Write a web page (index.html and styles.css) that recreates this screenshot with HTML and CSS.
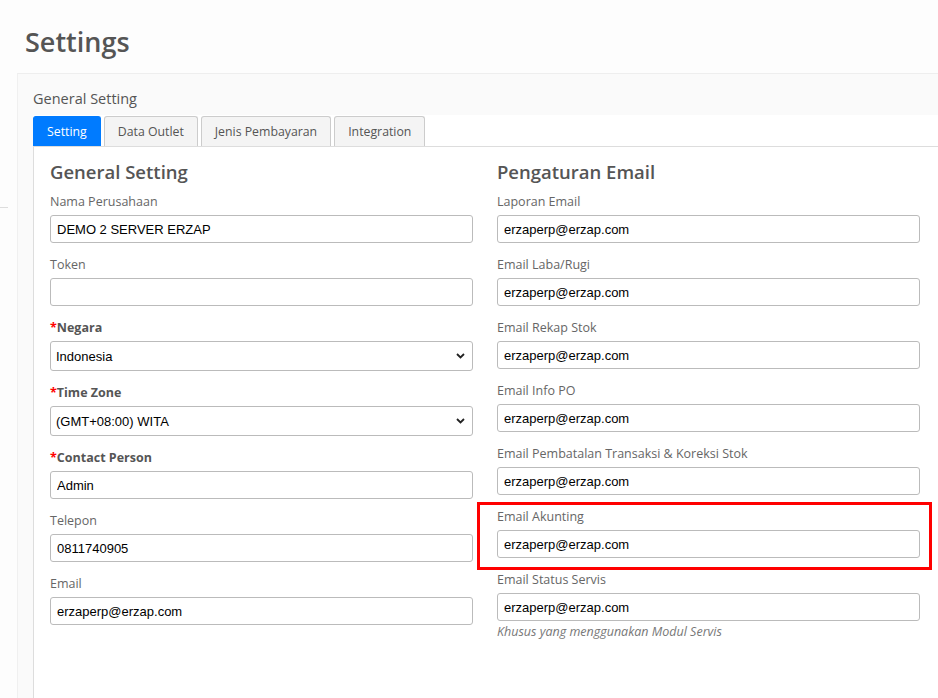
FILE: index.html
```html
<!DOCTYPE html>
<html lang="id">
<head>
    <meta charset="UTF-8">
    <meta name="viewport" content="width=device-width, initial-scale=1.0">
    <title>Settings</title>
    <link rel="stylesheet" href="styles.css">
</head>
<body>

    <!-- Judul halaman -->
    <h1 class="page-title">Settings</h1>

    <div class="page">
        <!-- sisa garis sidebar -->
        <div class="side-stub"></div>

        <div class="card">
            <div class="card-header">General Setting</div>

            <div class="card-body">
                <!-- Tab -->
                <nav class="tabs">
                    <a href="#" class="tab active">Setting</a>
                    <a href="#" class="tab">Data Outlet</a>
                    <a href="#" class="tab">Jenis Pembayaran</a>
                    <a href="#" class="tab">Integration</a>
                </nav>

                <div class="tab-panel">
                    <!-- Kolom kiri -->
                    <div class="col">
                        <h4 class="col-title">General Setting</h4>

                        <div class="form-group">
                            <label>Nama Perusahaan</label>
                            <input type="text" class="form-control" value="DEMO 2 SERVER ERZAP">
                        </div>
                        <div class="form-group">
                            <label>Token</label>
                            <input type="text" class="form-control" value="">
                        </div>
                        <div class="form-group">
                            <label class="required"><span class="star">*</span>Negara</label>
                            <div class="select-wrap">
                                <select class="form-control">
                                    <option>Indonesia</option>
                                </select>
                                <svg class="chevron" width="9" height="6" viewBox="0 0 9 6"><path d="M1 1l3.5 3.5L8 1" fill="none" stroke="#222" stroke-width="1.8"/></svg>
                            </div>
                        </div>
                        <div class="form-group">
                            <label class="required"><span class="star">*</span>Time Zone</label>
                            <div class="select-wrap">
                                <select class="form-control">
                                    <option>(GMT+08:00) WITA</option>
                                </select>
                                <svg class="chevron" width="9" height="6" viewBox="0 0 9 6"><path d="M1 1l3.5 3.5L8 1" fill="none" stroke="#222" stroke-width="1.8"/></svg>
                            </div>
                        </div>
                        <div class="form-group">
                            <label class="required"><span class="star">*</span>Contact Person</label>
                            <input type="text" class="form-control" value="Admin">
                        </div>
                        <div class="form-group">
                            <label>Telepon</label>
                            <input type="text" class="form-control" value="0811740905">
                        </div>
                        <div class="form-group">
                            <label>Email</label>
                            <input type="text" class="form-control" value="erzaperp@erzap.com">
                        </div>
                    </div>

                    <!-- Kolom kanan -->
                    <div class="col">
                        <h4 class="col-title">Pengaturan Email</h4>

                        <div class="form-group">
                            <label>Laporan Email</label>
                            <input type="text" class="form-control" value="erzaperp@erzap.com">
                        </div>
                        <div class="form-group">
                            <label>Email Laba/Rugi</label>
                            <input type="text" class="form-control" value="erzaperp@erzap.com">
                        </div>
                        <div class="form-group">
                            <label>Email Rekap Stok</label>
                            <input type="text" class="form-control" value="erzaperp@erzap.com">
                        </div>
                        <div class="form-group">
                            <label>Email Info PO</label>
                            <input type="text" class="form-control" value="erzaperp@erzap.com">
                        </div>
                        <div class="form-group">
                            <label>Email Pembatalan Transaksi &amp; Koreksi Stok</label>
                            <input type="text" class="form-control" value="erzaperp@erzap.com">
                        </div>
                        <div class="form-group highlight">
                            <label>Email Akunting</label>
                            <input type="text" class="form-control" value="erzaperp@erzap.com">
                        </div>
                        <div class="form-group">
                            <label>Email Status Servis</label>
                            <input type="text" class="form-control" value="erzaperp@erzap.com">
                            <small class="help">Khusus yang menggunakan Modul Servis</small>
                        </div>
                    </div>
                </div>
            </div>
        </div>
    </div>

</body>
</html>
```

FILE: styles.css
```css
/* Umum */
body {
    margin: 0;
    background-color: #fdfdfd;
    font-family: "Open Sans", "Noto Sans", sans-serif;
    color: #555;
    overflow: hidden;
    height: 698px;
}

.page-title {
    margin: 25px 0 14px 25px;
    font-size: 27px;
    line-height: 34px;
    font-weight: 600;
    color: #555;
}

.page {
    display: flex;
}

.side-stub {
    flex: none;
    width: 8px;
    height: 134px;
    margin-right: 9px;
    border-bottom: 1px solid #ddd;
}

/* Card */
.card {
    flex: 1;
    min-height: 640px;
    background-color: #fafafa;
    border-top: 1px solid #eee;
    border-left: 1px solid #f0f0f0;
    padding-left: 15px;
}

.card-header {
    padding: 15px 0 6px;
    font-size: 14.5px;
    line-height: 20px;
    color: #555;
}

.card-body {
    background-color: #fff;
}

/* Tab */
.tabs {
    display: flex;
    gap: 3px;
    padding-top: 1px;
    border-bottom: 1px solid #ddd;
}

.tab {
    display: block;
    height: 29px;
    line-height: 29px;
    padding: 0 13px;
    font-size: 12.3px;
    color: #555;
    text-decoration: none;
    background-color: #f4f4f4;
    border: 1px solid #ccc;
    border-bottom: none;
    border-radius: 3px 3px 0 0;
}

.tab.active {
    background-color: #007bff;
    border-color: #007bff;
    color: #fff;
}

.tab-panel {
    display: grid;
    grid-template-columns: 1fr 1fr;
    column-gap: 24px;
    padding: 13px 18px 0 16px;
    border-left: 1px solid #ddd;
    min-height: 540px;
}

.col-title {
    margin: 0 0 9px;
    font-size: 18.5px;
    line-height: 24px;
    font-weight: 600;
    color: #555;
}

/* Form */
.form-group {
    margin-bottom: 13px;
    position: relative;
}

.form-group label {
    display: block;
    margin-bottom: 4px;
    font-size: 12.5px;
    line-height: 18px;
    color: #666;
}

.form-group label.required {
    font-weight: 700;
    color: #555;
}

.star {
    color: #f00;
}

.form-control {
    display: block;
    width: 100%;
    box-sizing: border-box;
    height: 28px;
    margin: 0;
    padding: 0 6px;
    font-family: "Liberation Sans", Arial, sans-serif;
    font-size: 13px;
    color: #000;
    background-color: #fff;
    border: 1px solid #bbb;
    border-radius: 3px;
    outline: none;
}

select.form-control {
    height: 30px;
    padding-left: 5px;
    appearance: none;
    -webkit-appearance: none;
}

.select-wrap {
    position: relative;
}

.chevron {
    position: absolute;
    right: 8px;
    top: 12px;
}

.help {
    display: block;
    margin-top: 3px;
    font-size: 12.5px;
    line-height: 16px;
    font-style: italic;
    color: #777;
}

/* Kotak merah penanda */
.highlight::after {
    content: "";
    position: absolute;
    left: -20px;
    top: -6px;
    right: -12px;
    bottom: -12px;
    border: 3px solid #f00;
    pointer-events: none;
}
```
